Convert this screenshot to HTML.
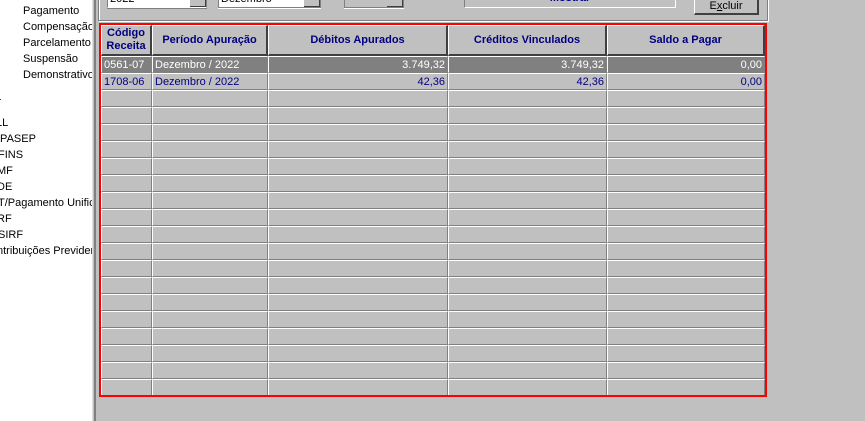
<!DOCTYPE html>
<html><head><meta charset="utf-8"><style>
*{margin:0;padding:0;box-sizing:border-box}
body{width:865px;height:421px;overflow:hidden;background:#c0c0c0;position:relative;font-family:"Liberation Sans",sans-serif;font-size:11px}
.a{position:absolute}
#left{left:0;top:0;width:92px;height:421px;background:#fff;overflow:hidden}
#left div{position:absolute;white-space:nowrap;color:#000;font-size:11px}
table{border-collapse:separate;border-spacing:0;table-layout:fixed}
td{height:17px;background:#c0c0c0;border-top:1px solid #fff;border-left:1px solid #fff;border-right:1px solid #808080;border-bottom:1px solid #808080;padding:0 2px;white-space:nowrap;overflow:hidden;color:#000080;font-size:11px;line-height:14px}
th{height:31px;background:#c0c0c0;border-top:1px solid #fff;border-left:1px solid #fff;border-right:2px solid #404040;border-bottom:2px solid #404040;color:#000080;font-weight:bold;font-size:11px;line-height:13px}
tr.sel td{background:#808080;color:#fff}
.r{text-align:right}
</style></head><body>
<div id="left" class="a">
<div style="left:23px;top:5px">Pagamento</div>
<div style="left:23px;top:21px">Compensação</div>
<div style="left:23px;top:37px">Parcelamento</div>
<div style="left:23px;top:53px">Suspensão</div>
<div style="left:23px;top:69px">Demonstrativo</div>
<div style="left:-1px;top:94px;color:#00c;font-size:9px">·</div>
<div style="left:-4px;top:117px">LL</div>
<div style="left:-3px;top:133px">/PASEP</div>
<div style="left:-2px;top:149px">FINS</div>
<div style="left:-3px;top:165px">MF</div>
<div style="left:-3px;top:181px">DE</div>
<div style="left:-2px;top:197px">T/Pagamento Unifica</div>
<div style="left:-3px;top:213px">RF</div>
<div style="left:-2px;top:229px">SIRF</div>
<div style="left:-3px;top:245px">ntribuições Previden</div>
</div>
<div class="a" style="left:92px;top:0;width:1px;height:421px;background:#e0e0e0"></div>
<div class="a" style="left:94px;top:0;width:2px;height:421px;background:#808080"></div>
<div class="a" style="left:98px;top:0;width:1px;height:21px;background:#808080"></div>
<div class="a" style="left:99px;top:0;width:1px;height:21px;background:#fff"></div>
<div class="a" style="left:99px;top:20px;width:669px;height:1px;background:#808080"></div>
<div class="a" style="left:99px;top:21px;width:670px;height:1px;background:#fff"></div>
<div class="a" style="left:767px;top:0;width:1px;height:21px;background:#808080"></div>
<div class="a" style="left:768px;top:0;width:1px;height:22px;background:#fff"></div>
<div class="a" style="left:107px;top:-8px;width:100px;height:16px;background:#fff;border:1px solid #808080;border-bottom-color:#fff;box-shadow:0 1px 0 #808080"><span style="position:absolute;left:2px;top:0;color:#000">2022</span><div class="a" style="right:0;top:0;width:16px;height:14px;background:#c0c0c0;border-right:1px solid #404040;border-bottom:1px solid #404040"></div></div>
<div class="a" style="left:218px;top:-8px;width:103px;height:16px;background:#fff;border:1px solid #808080;box-shadow:0 1px 0 #fff"><span style="position:absolute;left:2px;top:0;color:#000">Dezembro</span><div class="a" style="right:0;top:0;width:16px;height:14px;background:#c0c0c0;border-right:1px solid #404040;border-bottom:1px solid #404040"></div></div>
<div class="a" style="left:344px;top:-8px;width:60px;height:16px;background:#c0c0c0;border:1px solid #808080;box-shadow:0 1px 0 #fff"><div class="a" style="right:0;top:0;width:16px;height:14px;background:#c0c0c0;border-right:1px solid #404040;border-bottom:1px solid #404040"></div></div>
<div class="a" style="left:464px;top:-8px;width:212px;height:16px;background:#c0c0c0;border:1px solid #808080;border-right-color:#fff;border-bottom-color:#fff;text-align:center;color:#000080;font-weight:bold;line-height:10px">Mostrar</div>
<div class="a" style="left:694px;top:-8px;width:65px;height:23px;background:#c0c0c0;border:1px solid #fff;border-right:2px solid #404040;border-bottom:2px solid #404040;text-align:center;line-height:27px;color:#000">E<u>x</u>cluir</div>
<div class="a" style="left:99px;top:23px;width:668px;height:374px;border:2px solid #f00;overflow:hidden">
<table style="width:664px">
<colgroup><col style="width:51px"><col style="width:116px"><col style="width:180px"><col style="width:159px"><col style="width:158px"></colgroup>
<tr><th>Código<br>Receita</th><th>Período Apuração</th><th>Débitos Apurados</th><th>Créditos Vinculados</th><th>Saldo a Pagar</th></tr>
<tr class="sel"><td>0561-07</td><td>Dezembro / 2022</td><td class="r">3.749,32</td><td class="r">3.749,32</td><td class="r">0,00</td></tr>
<tr><td>1708-06</td><td>Dezembro / 2022</td><td class="r">42,36</td><td class="r">42,36</td><td class="r">0,00</td></tr>
<tr><td></td><td></td><td></td><td></td><td></td></tr>
<tr><td></td><td></td><td></td><td></td><td></td></tr>
<tr><td></td><td></td><td></td><td></td><td></td></tr>
<tr><td></td><td></td><td></td><td></td><td></td></tr>
<tr><td></td><td></td><td></td><td></td><td></td></tr>
<tr><td></td><td></td><td></td><td></td><td></td></tr>
<tr><td></td><td></td><td></td><td></td><td></td></tr>
<tr><td></td><td></td><td></td><td></td><td></td></tr>
<tr><td></td><td></td><td></td><td></td><td></td></tr>
<tr><td></td><td></td><td></td><td></td><td></td></tr>
<tr><td></td><td></td><td></td><td></td><td></td></tr>
<tr><td></td><td></td><td></td><td></td><td></td></tr>
<tr><td></td><td></td><td></td><td></td><td></td></tr>
<tr><td></td><td></td><td></td><td></td><td></td></tr>
<tr><td></td><td></td><td></td><td></td><td></td></tr>
<tr><td></td><td></td><td></td><td></td><td></td></tr>
<tr><td></td><td></td><td></td><td></td><td></td></tr>
<tr><td></td><td></td><td></td><td></td><td></td></tr>
<tr><td></td><td></td><td></td><td></td><td></td></tr>
</table>
</div>
</body></html>
